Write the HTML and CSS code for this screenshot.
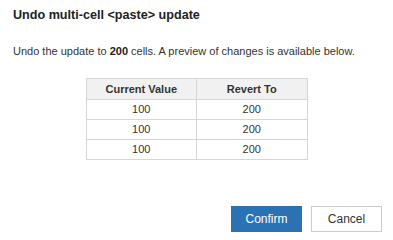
FILE: index.html
```html
<!DOCTYPE html>
<html>
<head>
<meta charset="utf-8">
<link rel="stylesheet" href="styles.css">
</head>
<body>
<div class="dialog">
  <h1 class="title">Undo multi-cell &lt;paste&gt; update</h1>
  <p class="message">Undo the update to <b>200</b> cells. A preview of changes is available below.</p>
  <table class="preview">
    <thead>
      <tr><th>Current Value</th><th>Revert To</th></tr>
    </thead>
    <tbody>
      <tr><td>100</td><td>200</td></tr>
      <tr><td>100</td><td>200</td></tr>
      <tr><td>100</td><td>200</td></tr>
    </tbody>
  </table>
  <div class="actions">
    <button class="btn btn-primary">Confirm</button>
    <button class="btn btn-secondary">Cancel</button>
  </div>
</div>
</body>
</html>
```
FILE: styles.css
```css
html, body {
  margin: 0;
  padding: 0;
  background: #ffffff;
}
body {
  font-family: "Liberation Sans", Arial, sans-serif;
  color: #333333;
}
.dialog {
  padding: 7px 11px 0 13px;
}
.title {
  margin: 0;
  font-size: 12.6px;
  line-height: 16px;
  font-weight: bold;
  color: #222222;
}
.message {
  margin: 21px 0 0 0;
  font-size: 11px;
  line-height: 14px;
  color: #333333;
}
.message b {
  color: #222222;
}
.preview {
  margin: 20px auto 0 auto;
  border-collapse: collapse;
  width: 222px;
  font-size: 11px;
  position: relative;
  left: -1px;
}
.preview th,
.preview td {
  border: 1px solid #d6d6d6;
  width: 50%;
  text-align: center;
  padding: 0;
}
.preview th {
  background: #f1f1f1;
  font-weight: bold;
  color: #333333;
  height: 20px;
  line-height: 14px;
}
.preview td {
  height: 19px;
  line-height: 13px;
  color: #333333;
}
.actions {
  display: flex;
  justify-content: flex-end;
  gap: 9px;
  margin-top: 46px;
}
.btn {
  box-sizing: border-box;
  width: 71px;
  height: 26px;
  font-family: "Liberation Sans", Arial, sans-serif;
  font-size: 12px;
  border-radius: 0;
  padding: 0;
  cursor: pointer;
}
.btn-primary {
  background: #2b72b4;
  border: 1px solid #2b72b4;
  color: #ffffff;
}
.btn-secondary {
  background: #ffffff;
  border: 1px solid #cccccc;
  color: #333333;
}
```
